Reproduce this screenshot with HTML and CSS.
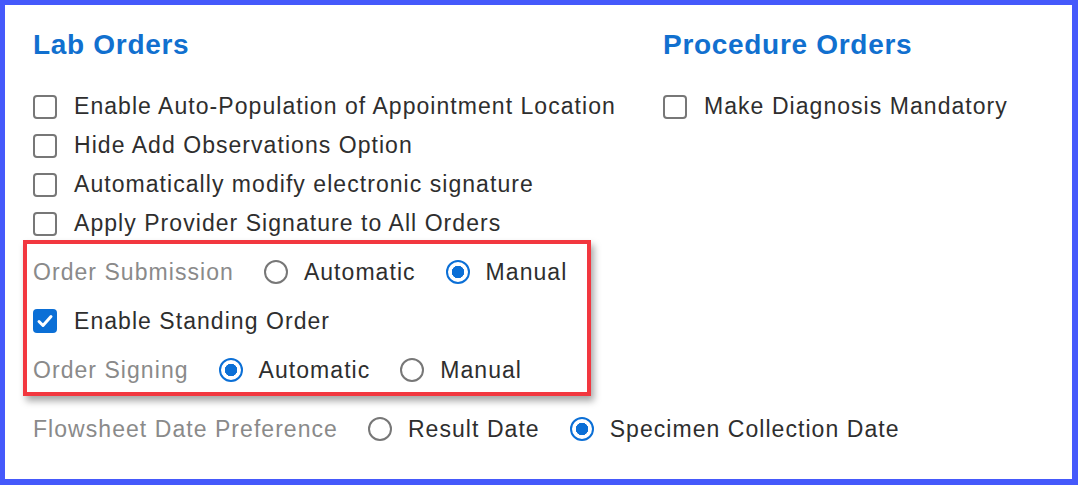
FILE: index.html
```html
<!DOCTYPE html>
<html lang="en">
<head>
  <meta charset="UTF-8">
  <meta name="viewport" content="width=device-width, initial-scale=1.0">
  <title>Order Settings</title>
  <link rel="stylesheet" href="styles.css">
</head>
<body>
  <div class="frame">
    <div class="columns">
      <div class="col lab">
        <h2>Lab Orders</h2>
        <div class="row"><span class="box"></span><span class="txt">Enable Auto-Population of Appointment Location</span></div>
        <div class="row"><span class="box"></span><span class="txt">Hide Add Observations Option</span></div>
        <div class="row"><span class="box"></span><span class="txt">Automatically modify electronic signature</span></div>
        <div class="row"><span class="box"></span><span class="txt">Apply Provider Signature to All Orders</span></div>

        <div class="highlight">
          <div class="row tall">
            <span class="label">Order Submission</span>
            <span class="radio"></span><span class="txt">Automatic</span>
            <span class="radio on"></span><span class="txt">Manual</span>
          </div>
          <div class="row tall">
            <span class="box checked">
              <svg viewBox="0 0 24 24" width="24" height="24"><path d="M6 12.5l4 4 8-9" fill="none" stroke="#fff" stroke-width="3" stroke-linecap="round" stroke-linejoin="round"/></svg>
            </span>
            <span class="txt">Enable Standing Order</span>
          </div>
          <div class="row tall">
            <span class="label">Order Signing</span>
            <span class="radio on"></span><span class="txt">Automatic</span>
            <span class="radio"></span><span class="txt">Manual</span>
          </div>
        </div>

        <div class="row tall flow">
          <span class="label">Flowsheet Date Preference</span>
          <span class="radio"></span><span class="txt">Result Date</span>
          <span class="radio on"></span><span class="txt">Specimen Collection Date</span>
        </div>
      </div>

      <div class="col proc">
        <h2>Procedure Orders</h2>
        <div class="row"><span class="box"></span><span class="txt">Make Diagnosis Mandatory</span></div>
      </div>
    </div>
  </div>
</body>
</html>
```

FILE: styles.css
```css
html, body {
  margin: 0;
  padding: 0;
  background: #fff;
}
.frame {
  box-sizing: border-box;
  width: 1078px;
  height: 485px;
  border: solid #4559fb;
  border-width: 5px 6px 6px 5px;
  padding: 23px 0 0 28px;
  font-family: "Liberation Sans", Arial, sans-serif;
  font-size: 23px;
  letter-spacing: 1.05px;
  color: #2e2e2e;
}
.columns {
  display: flex;
}
.lab {
  width: 630px;
}
h2 {
  margin: 0 0 25px 0;
  font-size: 28px;
  line-height: 34px;
  font-weight: bold;
  letter-spacing: 0.7px;
  color: #1170cf;
}
.row {
  display: flex;
  align-items: center;
  height: 39px;
  white-space: nowrap;
}
.row.tall {
  height: 44px;
}
.box {
  box-sizing: border-box;
  width: 24px;
  height: 24px;
  flex: none;
  border: 2px solid #777;
  border-radius: 4px;
  margin-right: 17px;
}
.box.checked {
  border: none;
  background: #0b6fd6;
}
.box svg {
  display: block;
}
.radio {
  box-sizing: border-box;
  width: 24px;
  height: 24px;
  flex: none;
  border: 2px solid #777;
  border-radius: 50%;
  margin: 0 16px 0 30px;
}
.radio.on {
  border-color: #0b6fd6;
  background: radial-gradient(circle, #0b6fd6 0 6px, #fff 6.5px);
}
.label {
  color: #8a8a8a;
}
.highlight {
  box-sizing: border-box;
  width: 568px;
  margin: -3px 0 0 -10px;
  padding: 6px 0 0 6px;
  border: 4px solid #f2373f;
  box-shadow: 3px 5px 7px rgba(0, 0, 0, 0.35);
  display: flex;
  flex-direction: column;
  gap: 5px;
}
.flow {
  margin-top: 11px;
}
```
